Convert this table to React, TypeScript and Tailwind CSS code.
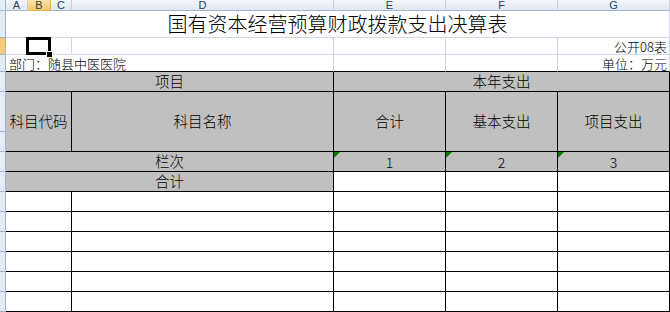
// Spreadsheet view: 国有资本经营预算财政拨款支出决算表

const colLetters = ["A", "B", "C", "D", "E", "F", "G"];
const bodyRows = [0, 1, 2, 3, 4, 5];

const cellFont = { fontFamily: '"Noto Sans CJK SC", "Noto Sans", sans-serif' };

function RowHead({ active = false }: { active?: boolean }) {
  return (
    <div
      className={
        "border-r border-b border-[#9eb6ce] " +
        (active ? "bg-[#f7c978]" : "bg-[#e4ecf7]")
      }
    />
  );
}

function GreenMark() {
  return (
    <span className="absolute left-0 top-0 h-0 w-0 border-t-[6px] border-r-[6px] border-t-[#008000] border-r-transparent" />
  );
}

export default function App() {
  return (
    <div
      className="grid h-[312px] w-[670px] overflow-hidden bg-white font-light text-black grid-cols-[6px_22px_23px_21px_262px_112px_112px_112px] grid-rows-[11px_27px_17px_17px_20px_60px_20px_20px_20px_20px_20px_20px_20px_20px]"
      style={cellFont}
    >
      {/* column headers */}
      <div className="border-r border-b border-[#9eb6ce] bg-[#e4ecf7]" />
      {colLetters.map((l) => (
        <div
          key={l}
          className={
            "flex items-center justify-center overflow-hidden border-b border-r text-[11px] font-normal leading-[9px] " +
            (l === "B"
              ? "border-[#e7b155] bg-gradient-to-b from-[#fbe3a7] to-[#f4c768] text-[#3c3c3c]"
              : "border-[#c5d1df] border-b-[#9eb6ce] bg-gradient-to-b from-[#f4f7fb] to-[#e1e8f2] text-[#27415f]")
          }
          style={{ fontFamily: '"Liberation Sans", Arial, sans-serif' }}
        >
          {l}
        </div>
      ))}

      {/* row 1: title */}
      <RowHead />
      <div className="col-span-7 flex items-center justify-center border-r border-b border-[#d0d7e5] text-[20px] leading-none whitespace-nowrap">
        国有资本经营预算财政拨款支出决算表
      </div>

      {/* row 2 */}
      <RowHead active />
      <div className="border-r border-b border-[#d0d7e5]" />
      <div className="relative border-r border-b border-[#d0d7e5]">
        <div className="absolute -left-[2px] -top-[1px] z-10 h-[18px] w-[25px] border-[3px] border-black" />
        <div className="absolute left-[18px] top-[13px] z-20 h-[7px] w-[7px] border border-white bg-black" />
      </div>
      <div className="border-r border-b border-[#d0d7e5]" />
      <div className="border-r border-b border-[#d0d7e5]" />
      <div className="border-r border-b border-[#d0d7e5]" />
      <div className="border-r border-b border-[#d0d7e5]" />
      <div className="flex items-end justify-end border-r border-b border-[#d0d7e5] pr-[2px] pb-[1px] text-[13px] leading-[13px] whitespace-nowrap">
        公开08表
      </div>

      {/* row 3 */}
      <RowHead />
      <div className="col-span-4 flex items-end border-b border-r border-b-black border-r-[#d0d7e5] pl-[3px] pb-[1px] text-[13px] leading-[13px] whitespace-nowrap">
        部门：随县中医医院
      </div>
      <div className="border-r border-b border-r-[#d0d7e5] border-b-black" />
      <div className="border-r border-b border-r-[#d0d7e5] border-b-black" />
      <div className="flex items-end justify-end border-r border-b border-r-[#d0d7e5] border-b-black pr-[2px] pb-[1px] text-[13px] leading-[13px] whitespace-nowrap">
        单位：万元
      </div>

      {/* row 4 */}
      <RowHead />
      <div className="col-span-4 flex items-center justify-center border-r border-b border-black bg-[#c0c0c0] text-[14.5px] leading-none">
        项目
      </div>
      <div className="col-span-3 flex items-center justify-center border-r border-b border-black bg-[#c0c0c0] text-[14.5px] leading-none">
        本年支出
      </div>

      {/* row 5 */}
      <div className="flex flex-col border-r border-b border-[#9eb6ce] bg-[#e4ecf7]">
        <div className="h-[40px] border-b border-[#9eb6ce]" />
      </div>
      <div className="col-span-3 flex items-center justify-center border-r border-b border-black bg-[#c0c0c0] text-[14.5px] leading-none whitespace-nowrap">
        科目代码
      </div>
      <div className="flex items-center justify-center border-r border-b border-black bg-[#c0c0c0] text-[14.5px] leading-none">
        科目名称
      </div>
      <div className="flex items-center justify-center border-r border-b border-black bg-[#c0c0c0] text-[14.5px] leading-none">
        合计
      </div>
      <div className="flex items-center justify-center border-r border-b border-black bg-[#c0c0c0] text-[14.5px] leading-none">
        基本支出
      </div>
      <div className="flex items-center justify-center border-r border-b border-black bg-[#c0c0c0] text-[14.5px] leading-none">
        项目支出
      </div>

      {/* row 6 */}
      <RowHead />
      <div className="col-span-4 flex items-center justify-center border-r border-b border-black bg-[#c0c0c0] text-[14.5px] leading-none">
        栏次
      </div>
      {["1", "2", "3"].map((n) => (
        <div
          key={n}
          className="relative flex items-end justify-center border-r border-b border-black bg-[#c0c0c0] pb-[2px] text-[14px] leading-none"
        >
          <GreenMark />
          {n}
        </div>
      ))}

      {/* row 7 */}
      <RowHead />
      <div className="col-span-4 flex items-center justify-center border-r border-b border-black bg-[#c0c0c0] text-[14.5px] leading-none">
        合计
      </div>
      <div className="border-r border-b border-black" />
      <div className="border-r border-b border-black" />
      <div className="border-r border-b border-black" />

      {/* empty body rows */}
      {bodyRows.map((r) => (
        <div key={r} className="contents">
          <RowHead />
          <div className="col-span-3 border-r border-b border-black" />
          <div className="border-r border-b border-black" />
          <div className="border-r border-b border-black" />
          <div className="border-r border-b border-black" />
          <div className="border-r border-b border-black" />
        </div>
      ))}
    </div>
  );
}
